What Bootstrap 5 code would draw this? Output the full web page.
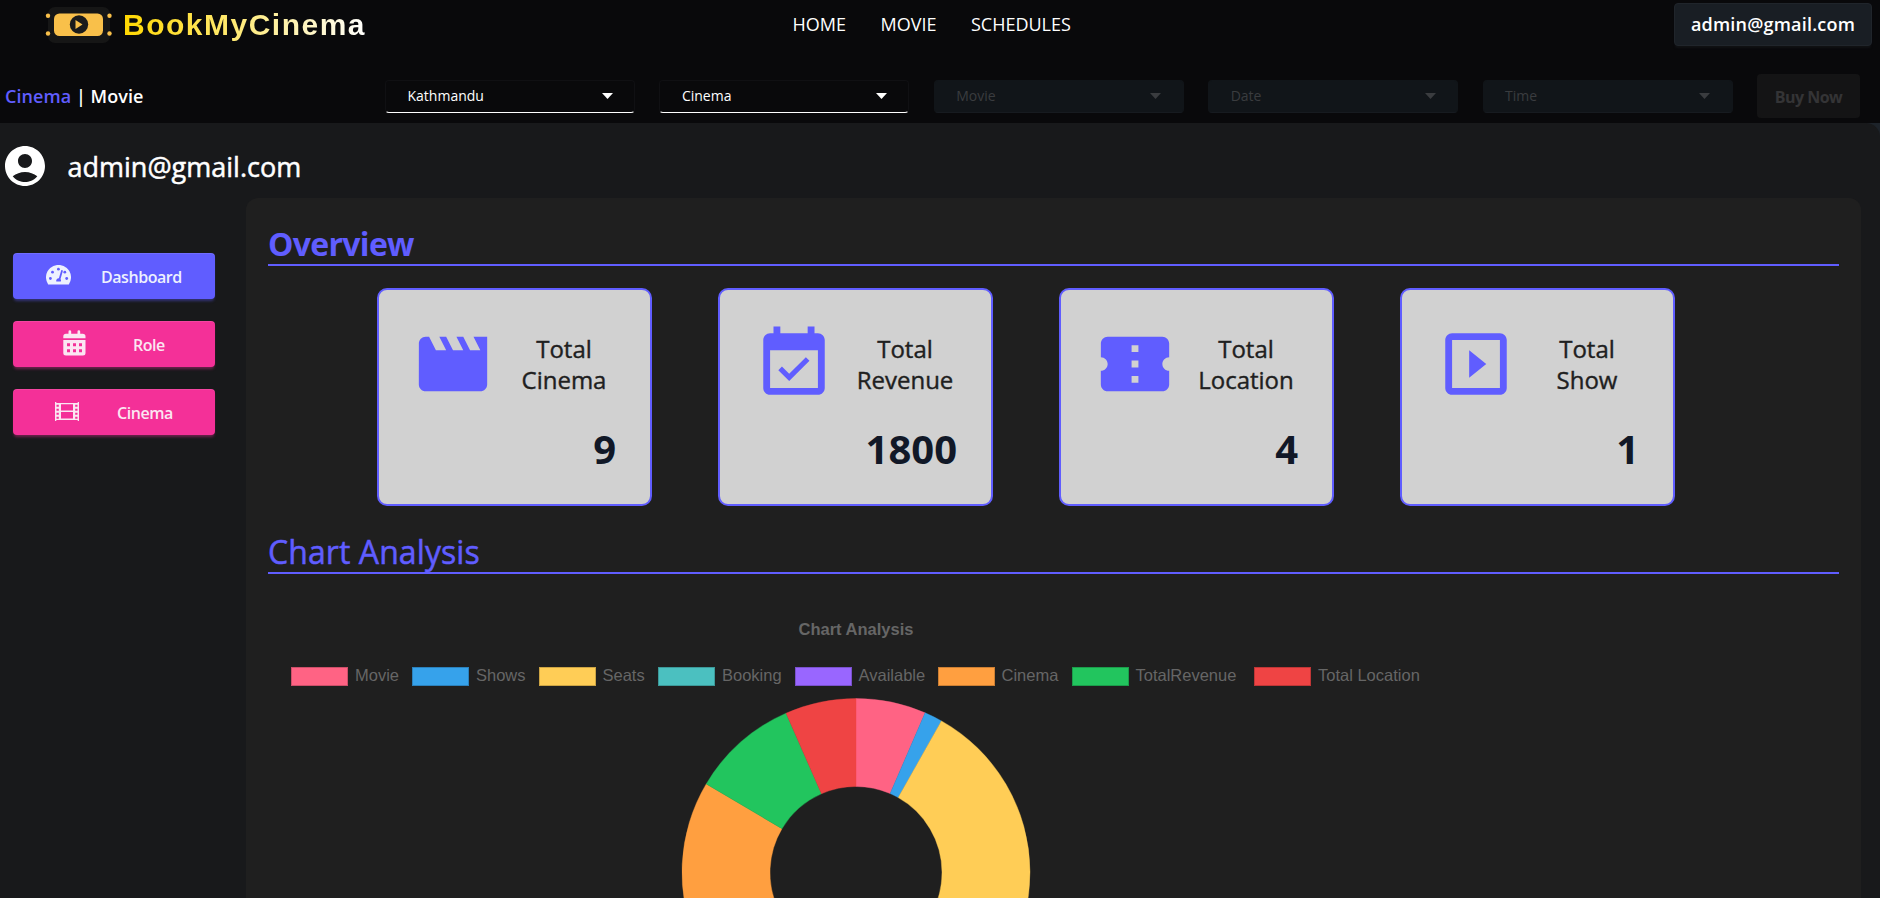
<!DOCTYPE html>
<html lang="en">
<head>
<meta charset="utf-8">
<meta name="viewport" content="width=device-width, initial-scale=1">
<title>BookMyCinema</title>
<link rel="stylesheet" href="https://cdn.jsdelivr.net/npm/bootstrap@5.3.0/dist/css/bootstrap.min.css">
<style>
body{background:#1d232a;color:#fff;font-family:"Open Sans","Noto Sans",sans-serif;height:898px;overflow:hidden}
.site-head{background:#09090b;height:123px}
.top-row{height:49px;padding:0 8px 0 45px}
.brand-text{font:bold 30px/40px "Liberation Sans",Arial,sans-serif;letter-spacing:1.5px;background:linear-gradient(90deg,#ffd700,#fff);-webkit-background-clip:text;background-clip:text;color:transparent;margin-left:11px;width:244px}
.main-nav{gap:34px;font-size:18px;margin:-2px 0 0 425.5px;line-height:26px}
.main-nav a{color:#fff;text-decoration:none}
.main-nav a+a{margin-left:.5px}
.mail-btn{background:#191e24;border:1px solid #20252b;border-radius:4px;width:198px;height:43px;font-weight:600;font-size:18px;letter-spacing:.2px;line-height:41px;padding:0;color:#fff;box-shadow:0 3px 2px -1px #101114}
.filter-row{height:48px;margin-top:23px;padding:0 20px 0 5px}
.mode{font-size:18px;font-weight:600;line-height:26px;width:380px;flex-shrink:0;letter-spacing:.05px}
.violet{color:#605dff}
.pick{width:250px;height:33px;flex-shrink:0;border-radius:4px;font-size:14px;padding:0 21.5px;margin-right:24.4px;background:#09090b;border:1px solid #101013;border-bottom:1px solid #fff;line-height:30px}
.pick svg{width:11px;height:6px}
.pick.off{background:#111519;border-color:#111519 #111519 #171b20;color:#3a3c3f}
.buy{width:103px;height:44px;flex-shrink:0;border-radius:4px;background:#141415;color:#343436;font-weight:700;font-size:16px;letter-spacing:-.5px;line-height:46px}
.page-main{background:#18191b;height:775px;border-radius:0 14px 0 0}
.who{height:75px;padding-left:4.5px}
.who svg{margin-top:10px}
.who span{font-size:27px;line-height:36px;margin-left:23px;margin-top:12px}
.mid-weight{font-weight:400;-webkit-text-stroke:.5px currentColor}
.side{width:246px;padding:55px 0 0 13px;gap:22px}
.side-btn{width:202px;height:46px;border-radius:4px;background:#f43098;color:#fbe6f2;font-size:16px;font-weight:600;letter-spacing:-.45px;line-height:48px;box-shadow:0 3px 3px -1px rgba(244,48,152,.4),inset 0 1px 0 rgba(255,255,255,.1)}
.side-btn.on{background:#605dff;color:#edf1fe;box-shadow:0 3px 3px -1px rgba(96,93,255,.4),inset 0 1px 0 rgba(255,255,255,.1)}
.side-btn svg{fill:currentColor;flex-shrink:0}
.go-dash svg{margin:12px 30px 0 33px}
.go-role svg{margin:9px 47px 0 50px}
.go-cinema svg{margin:13px 38px 0 42px}
.panel{width:1615px;height:700px;background:#1f1f1f;border-radius:12px 12px 0 0;padding:24px 22px 0}
.sec{color:#605dff;border-bottom:2px solid #605dff;font-size:32px;line-height:44px;height:44px;margin:0}
.sec.fw-bold{letter-spacing:-.7px}
.stats{margin:22px 0 0 109px;gap:66px}
.stat{width:275px;height:218px;background:#d1d1d1;border:2px solid #605dff;border-radius:10px;color:#1f1f1f;padding:33px 34px 0 33px}
.stat svg{width:82px;height:82px;fill:#605dff;flex-shrink:0}
.stat .lbl{width:140px;font-size:24px;line-height:31px;margin-right:-18px;-webkit-text-stroke:.4px currentColor}
.stat .num{font-size:40px;font-weight:700;line-height:48px;color:#111827;text-align:right;margin-top:20px}
.sec.second{margin-top:24px;letter-spacing:.08px}
.chart{font-family:"Liberation Sans",Arial,sans-serif;font-size:16.5px;color:#666}
.chart .ttl{font-weight:700;width:1176px;text-align:center;line-height:20px;margin-top:45px}
.legend-row{display:grid;grid-template-columns:121px 126.5px 119.5px 136.5px 143px 134px 182.5px 200px;margin:27px 0 0 23px;line-height:18px}
.sw{width:57px;height:19px;margin:1px 7px 0 0;border:1px solid rgba(0,0,0,.2)}
.donut{display:block;width:352px;height:200px;margin:12px 0 0 412px}
</style>
</head>
<body>
<header class="site-head">
  <div class="top-row d-flex align-items-center">
    <svg width="67" height="36" viewBox="0 0 67 36"><rect x="3" width="62" height="36" rx="7" fill="#161616"/><g fill="#f9c04a"><rect x="9" y="6.500" width="49" height="22.500" rx="5.500"/><circle cx="3" cy="8.700" r="2.200"/><circle cx="3" cy="26.500" r="2.200"/><circle cx="64.500" cy="8.700" r="2.200"/><circle cx="64.500" cy="26.500" r="2.200"/></g><circle cx="34" cy="17.500" r="9.200" fill="#1b1b1b"/><path d="M30.500 13v9l7-4.500z" fill="#f9c04a"/></svg>
    <span class="brand-text">BookMyCinema</span>
    <nav class="main-nav d-flex"><a href="#">HOME</a><a href="#">MOVIE</a><a href="#">SCHEDULES</a></nav>
    <button class="mail-btn ms-auto text-center">admin@gmail.com</button>
  </div>
  <div class="filter-row d-flex align-items-center">
    <div class="mode"><span class="violet">Cinema</span> <span>|</span> <span>Movie</span></div>
    <div class="pick d-flex justify-content-between align-items-center"><span>Kathmandu</span><svg viewBox="0 0 11 6"><path d="M0 0h11L5.500 6z" fill="currentColor"/></svg></div>
    <div class="pick d-flex justify-content-between align-items-center"><span>Cinema</span><svg viewBox="0 0 11 6"><path d="M0 0h11L5.500 6z" fill="currentColor"/></svg></div>
    <div class="pick off d-flex justify-content-between align-items-center"><span>Movie</span><svg viewBox="0 0 11 6"><path d="M0 0h11L5.500 6z" fill="currentColor"/></svg></div>
    <div class="pick off d-flex justify-content-between align-items-center"><span>Date</span><svg viewBox="0 0 11 6"><path d="M0 0h11L5.500 6z" fill="currentColor"/></svg></div>
    <div class="pick off d-flex justify-content-between align-items-center"><span>Time</span><svg viewBox="0 0 11 6"><path d="M0 0h11L5.500 6z" fill="currentColor"/></svg></div>
    <div class="buy text-center">Buy Now</div>
  </div>
</header>
<main class="page-main">
  <div class="who d-flex align-items-center">
    <svg width="40" height="40" viewBox="2 2 20 20"><path fill="#fff" d="M12 2C6.480 2 2 6.480 2 12s4.480 10 10 10 10-4.480 10-10S17.520 2 12 2zm0 4c1.930 0 3.500 1.570 3.500 3.500S13.930 13 12 13s-3.500-1.570-3.500-3.500S10.070 6 12 6zm0 14c-2.030 0-4.430-.82-6.140-2.880C7.550 15.800 9.680 15 12 15s4.450.8 6.140 2.120C16.430 19.180 14.030 20 12 20z"/></svg>
    <span class="mid-weight">admin@gmail.com</span>
  </div>
  <div class="d-flex">
    <aside class="side d-flex flex-column">
      <div class="side-btn on go-dash d-flex"><svg width="25" height="20" viewBox="0 0 25 20"><path d="M2.200 19.500A12.500 12.500 0 1 1 22.800 19.500z"/><g fill="#605dff"><circle cx="4.400" cy="13.500" r="1.400"/><circle cx="6.500" cy="7.200" r="1.400"/><circle cx="12.400" cy="4.200" r="1.400"/><circle cx="18.800" cy="7.200" r="1.400"/><circle cx="20.700" cy="13.500" r="1.400"/><path d="M10.300 16.600a2.600 2.600 0 0 1 2.600-3.400L15.300 5l1.700.5-2.500 8.400q1 1.200.3 2.700z"/></g></svg><span>Dashboard</span></div>
      <div class="side-btn go-role d-flex"><svg width="23" height="26" viewBox="0 0 23 26"><path fill-rule="evenodd" d="M5.500 1.500q0-1.200 1.300-1.200T8.200 1.500v2.300h6.300V1.500q0-1.200 1.300-1.200t1.400 1.200v2.300h2.500q2.800 0 2.800 2.700v1.700H.3V6.500q0-2.700 2.700-2.700h2.500zM.3 10h22.200v13q0 2.500-2.600 2.500H3q-2.700 0-2.700-2.500zM4 13.300v2.900h3v-2.900zm6 0v2.900h3v-2.900zm6 0v2.900h3v-2.900zM4 19.300v2.900h3v-2.900zm6 0v2.900h3v-2.900zm6 0v2.900h3v-2.900z"/></svg><span>Role</span></div>
      <div class="side-btn go-cinema d-flex"><svg width="24" height="19" viewBox="0 0 24 19"><path fill-rule="evenodd" d="M0 0h1.300v1H22.700V0H24v19h-1.300v-1H1.300v1H0zM6 2.200v6.200h12V2.200zM6 10v6.500h12V10zM1.500 2.800v2h2.300v-2zm0 4v2h2.300v-2zm0 4v2h2.300v-2zm0 4v2h2.300v-2zM20.200 2.800v2h2.300v-2zm0 4v2h2.300v-2zm0 4v2h2.300v-2zm0 4v2h2.300v-2z"/></svg><span>Cinema</span></div>
    </aside>
    <section class="panel">
      <h2 class="sec fw-bold">Overview</h2>
      <div class="stats d-flex">
        <div class="stat"><div class="d-flex align-items-center"><svg viewBox="0 0 24 24"><path d="M18 4l2 4h-3l-2-4h-2l2 4h-3l-2-4H8l2 4H7L5 4H4c-1.100 0-1.990.9-1.990 2L2 18c0 1.100.9 2 2 2h16c1.100 0 2-.9 2-2V4h-4z"/></svg><div class="lbl text-center">Total<br>Cinema</div></div><div class="num">9</div></div>
        <div class="stat"><div class="d-flex align-items-center"><svg viewBox="0 0 24 24"><path d="M16.530 11.060L15.470 10l-4.880 4.880-2.120-2.120-1.060 1.060L10.590 17l5.940-5.940zM19 3h-1V1h-2v2H8V1H6v2H5c-1.110 0-1.990.9-1.990 2L3 19c0 1.100.89 2 2 2h14c1.100 0 2-.9 2-2V5c0-1.100-.9-2-2-2zm0 16H5V8h14v11z"/></svg><div class="lbl text-center">Total<br>Revenue</div></div><div class="num">1800</div></div>
        <div class="stat"><div class="d-flex align-items-center"><svg viewBox="0 0 24 24"><path d="M22 10V6c0-1.110-.9-2-2-2H4c-1.100 0-1.990.89-1.990 2v4c1.100 0 1.990.9 1.990 2s-.89 2-2 2v4c0 1.100.9 2 2 2h16c1.100 0 2-.9 2-2v-4c-1.100 0-2-.9-2-2s.9-2 2-2zm-9 7.500h-2v-2h2v2zm0-4.500h-2v-2h2v2zm0-4.500h-2v-2h2v2z"/></svg><div class="lbl text-center">Total<br>Location</div></div><div class="num">4</div></div>
        <div class="stat"><div class="d-flex align-items-center"><svg viewBox="0 0 24 24"><path d="M10 8v8l5-4-5-4zm9-5H5c-1.100 0-2 .9-2 2v14c0 1.100.9 2 2 2h14c1.100 0 2-.9 2-2V5c0-1.100-.9-2-2-2zm0 16H5V5h14v14z"/></svg><div class="lbl text-center">Total<br>Show</div></div><div class="num">1</div></div>
      </div>
      <h2 class="sec second mid-weight">Chart Analysis</h2>
      <div class="chart">
        <div class="ttl">Chart Analysis</div>
        <div class="legend-row">
          <div class="d-flex"><i class="sw" style="background:#ff6384"></i>Movie</div>
          <div class="d-flex"><i class="sw" style="background:#36a2eb"></i>Shows</div>
          <div class="d-flex"><i class="sw" style="background:#ffcd56"></i>Seats</div>
          <div class="d-flex"><i class="sw" style="background:#4bc0c0"></i>Booking</div>
          <div class="d-flex"><i class="sw" style="background:#9966ff"></i>Available</div>
          <div class="d-flex"><i class="sw" style="background:#ff9f40"></i>Cinema</div>
          <div class="d-flex"><i class="sw" style="background:#22c55e"></i>TotalRevenue</div>
          <div class="d-flex"><i class="sw" style="background:#ef4444"></i>Total Location</div>
        </div>
        <svg class="donut" viewBox="-176 -174.500 352 200" id="donut"></svg>
      </div>
    </section>
  </div>
</main>
<script src="https://cdn.jsdelivr.net/npm/bootstrap@5.3.0/dist/js/bootstrap.bundle.min.js"></script>
<script>
// Ring segments: start angle, end angle (degrees clockwise from the top), fill
const slices = [[0,23.4,'#ff6384'],[23.4,29.4,'#36a2eb'],[29.4,150,'#ffcd56'],[150,190,'#4bc0c0'],[190,245,'#9966ff'],[245,300.6,'#ff9f40'],[300.6,336.3,'#22c55e'],[336.3,360,'#ef4444']];
const at = (r, a) => (r * Math.sin(a * Math.PI / 180)).toFixed(2) + ' ' + (-r * Math.cos(a * Math.PI / 180)).toFixed(2);
document.getElementById('donut').innerHTML = slices.map(([a, b, c]) =>
  `<path fill="${c}" stroke="${c}" stroke-width=".4" d="M${at(174, a)}A174 174 0 0 1 ${at(174, b)}L${at(86, b)}A86 86 0 0 0 ${at(86, a)}z"/>`).join('');
</script>
</body>
</html>
